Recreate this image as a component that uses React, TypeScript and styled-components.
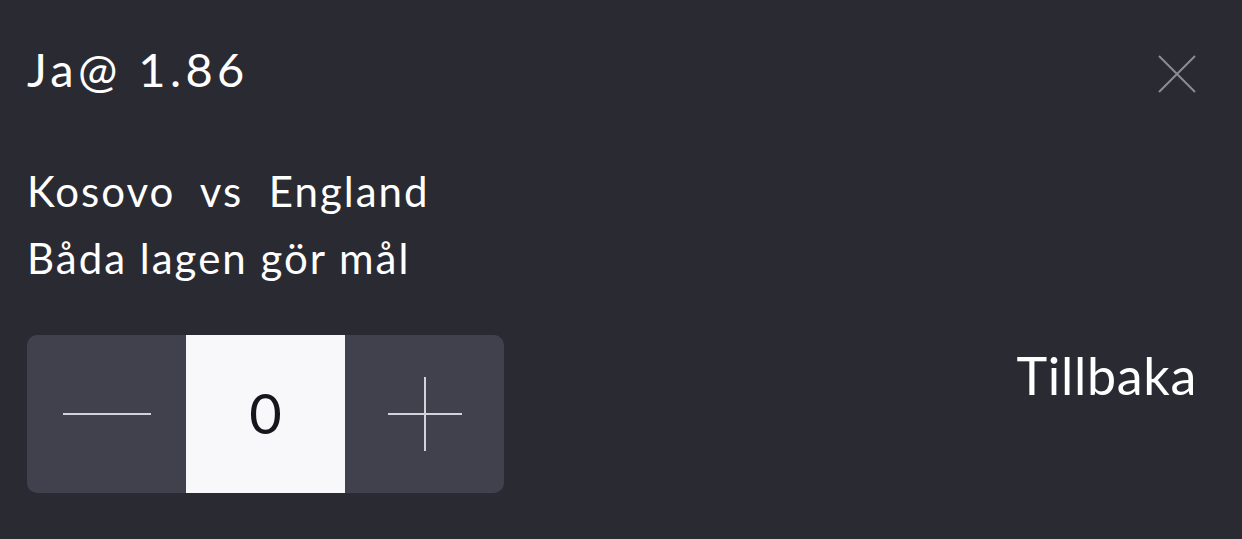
import styled, { createGlobalStyle } from 'styled-components'

const GlobalStyle = createGlobalStyle`
  html, body {
    margin: 0;
    padding: 0;
    background: #2a2a33;
  }
  body {
    font-family: 'Lato', 'Open Sans', sans-serif;
    color: #ffffff;
  }
`

const Sheet = styled.div`
  width: 1242px;
  height: 539px;
  box-sizing: border-box;
  padding: 36px 46px 0 27px;
  background: #2a2a33;
  display: flex;
  flex-direction: column;
`

const Header = styled.div`
  display: flex;
  align-items: center;
  justify-content: space-between;
  height: 66px;
`

const Title = styled.h1`
  margin: 0;
  font-size: 47px;
  line-height: 66px;
  font-weight: 400;
  letter-spacing: 4.4px;
`

const CloseButton = styled.button`
  width: 40px;
  height: 40px;
  padding: 0;
  border: 0;
  background: none;
  display: flex;
  align-items: center;
  justify-content: center;
  margin-top: 10px;
  margin-right: -1px;
`

const Match = styled.div`
  margin-top: 56px;
  display: flex;
  flex-direction: column;
`

const Line = styled.div`
  font-size: 42px;
  line-height: 67px;
  letter-spacing: 2px;
  white-space: pre;
`

const Footer = styled.div`
  margin-top: 43px;
  display: flex;
  align-items: flex-start;
  justify-content: space-between;
`

const Stepper = styled.div`
  display: flex;
  width: 477px;
  height: 158px;
  border-radius: 10px;
  overflow: hidden;
  background: #41414d;
`

const StepButton = styled.button`
  flex: 1;
  border: 0;
  padding: 0;
  background: transparent;
  display: flex;
  align-items: center;
  justify-content: center;
`

const Value = styled.div<{ $bg: string }>`
  flex: 1;
  background: ${p => p.$bg};
  color: #16161c;
  font-size: 56px;
  display: flex;
  align-items: center;
  justify-content: center;
  padding-bottom: 4px;
`

const BackLink = styled.button`
  border: 0;
  background: none;
  padding: 0;
  margin-top: 9px;
  margin-right: -1px;
  color: #ffffff;
  font-family: 'Lato', 'Open Sans', sans-serif;
  font-size: 52px;
  line-height: 62px;
  letter-spacing: 0.7px;
`

export default function App() {
  return (
    <>
      <GlobalStyle />
      <Sheet>
        <Header>
          <Title>Ja@ 1.86</Title>
          <CloseButton aria-label="Stäng">
            <svg width="40" height="40" viewBox="0 0 40 40">
              <path d="M2 2 L38 38 M38 2 L2 38" stroke="#8b8b93" strokeWidth="2" />
            </svg>
          </CloseButton>
        </Header>
        <Match>
          <Line>{'Kosovo  vs  England'}</Line>
          <Line>Båda lagen gör mål</Line>
        </Match>
        <Footer>
          <Stepper>
            <StepButton aria-label="Minska">
              <svg width="90" height="4" viewBox="0 0 90 4">
                <path d="M1 2 H89" stroke="#d2d2da" strokeWidth="2" />
              </svg>
            </StepButton>
            <Value $bg="#f8f8fa">0</Value>
            <StepButton aria-label="Öka">
              <svg width="78" height="78" viewBox="0 0 78 78">
                <path d="M2 39 H76 M39 2 V76" stroke="#d2d2da" strokeWidth="2" />
              </svg>
            </StepButton>
          </Stepper>
          <BackLink>Tillbaka</BackLink>
        </Footer>
      </Sheet>
    </>
  )
}
